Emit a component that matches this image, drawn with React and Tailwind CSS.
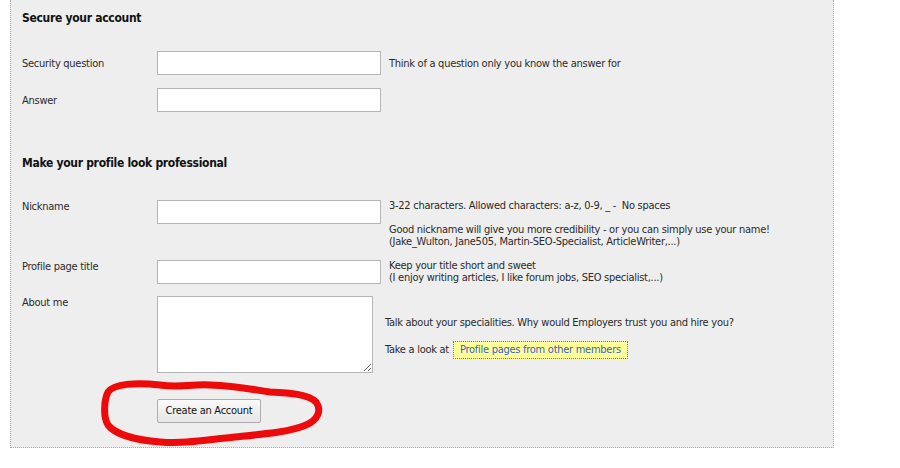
export default function App() {
  const font = { fontFamily: '"DejaVu Sans Condensed", "Liberation Sans", sans-serif' };
  return (
    <div className="relative w-[900px] h-[468px] bg-white overflow-hidden text-[11px] leading-[12px] tracking-[-0.27px] text-[#2a2a2a]" style={font}>
      <div className="ml-[10px] w-[824px] h-[448px] bg-[#eeeeee] border-l border-r border-b border-dotted border-[#a8a8a8] pl-[11px]">
        <h2 className="pt-[11px] text-[12px] leading-[14px] font-bold tracking-[-0.3px] text-[#111]">Secure your account</h2>

        <div className="mt-[26px] flex items-center">
          <label className="w-[135px] pt-[1px]">Security question</label>
          <input className="w-[224px] h-[24px] bg-white border border-[#b5b5b5]" />
          <span className="ml-[8px] pt-[1px]">Think of a question only you know the answer for</span>
        </div>
        <div className="mt-[13px] flex items-center">
          <label className="w-[135px] pt-[1px]">Answer</label>
          <input className="w-[224px] h-[24px] bg-white border border-[#b5b5b5]" />
        </div>

        <h2 className="mt-[44px] text-[12px] leading-[14px] font-bold tracking-[-0.3px] text-[#111]">Make your profile look professional</h2>

        <div className="mt-[30px] flex items-start">
          <label className="w-[135px] pt-[1px]">Nickname</label>
          <input className="w-[224px] h-[24px] bg-white border border-[#b5b5b5]" />
          <div className="ml-[8px]">
            <p>3-22 characters. Allowed characters: a-z, 0-9, _ -&nbsp; No spaces</p>
            <p className="mt-[12px]">Good nickname will give you more credibility - or you can simply use your name!</p>
            <p>(Jake_Wulton, Jane505, Martin-SEO-Specialist, ArticleWriter,...)</p>
          </div>
        </div>

        <div className="mt-[12px] flex items-start">
          <label className="w-[135px] pt-[1px]">Profile page title</label>
          <input className="w-[224px] h-[24px] bg-white border border-[#b5b5b5]" />
          <div className="ml-[8px]">
            <p>Keep your title short and sweet</p>
            <p>(I enjoy writing articles, I like forum jobs, SEO specialist,...)</p>
          </div>
        </div>

        <div className="mt-[12px] flex items-start">
          <label className="w-[135px] pt-[1px]">About me</label>
          <textarea className="w-[216px] h-[77px] bg-white border border-[#b5b5b5] resize-y" />
          <div className="ml-[12px] pt-[21px]">
            <p>Talk about your specialities. Why would Employers trust you and hire you?</p>
            <div className="mt-[12px] flex items-center">
              <span>Take a look at</span>
              <a className="ml-[4px] h-[18px] px-[6px] flex items-center bg-[#ffff99] border border-dotted border-[#777] text-[#3a5fc4]">Profile pages from other members</a>
            </div>
          </div>
        </div>

        <div className="mt-[26px] pl-[135px]">
          <button className="w-[104px] h-[24px] bg-gradient-to-b from-[#fafafa] to-[#e6e6e6] border border-[#adadad] rounded-[2px] text-[11px] tracking-[-0.27px] text-[#111]">Create an Account</button>
        </div>
      </div>

      <svg className="absolute left-0 top-0 pointer-events-none" width="900" height="468" viewBox="0 0 900 468">
        <path
          d="M108 392 C114 384 135 382 160 385 C180 388 190 384 210 385 C235 386 250 389 270 392 C290 393 308 394 316 402 C322 410 318 420 306 425 C290 432 265 434 235 437 C205 440 185 444 160 442 C135 440 115 434 108 425 C103 417 104 400 108 392 Z"
          fill="none"
          stroke="#ee0a0a"
          strokeWidth="7"
          strokeLinejoin="round"
        />
      </svg>
    </div>
  );
}
